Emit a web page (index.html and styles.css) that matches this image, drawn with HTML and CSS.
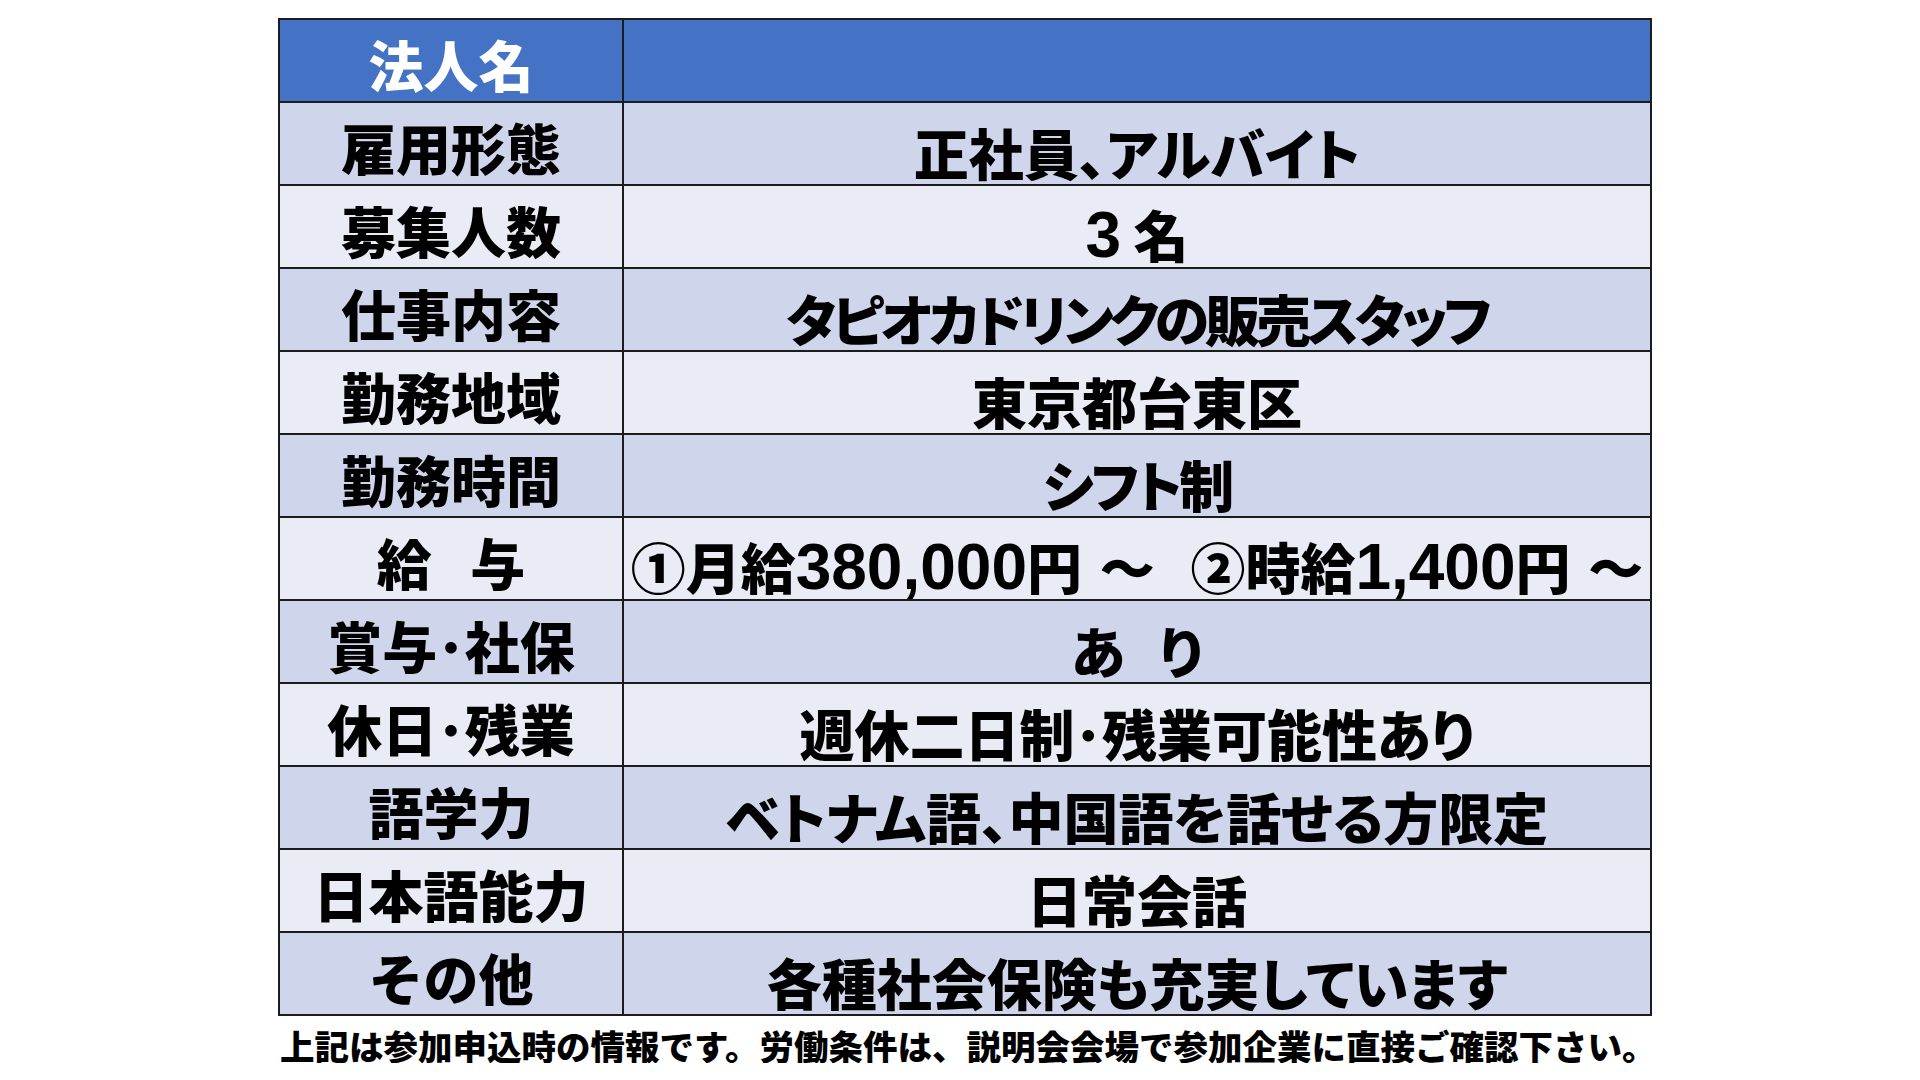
FILE: index.html
```html
<!DOCTYPE html>
<html lang="ja">
<head>
<meta charset="utf-8">
<title>募集要項</title>
<link rel="stylesheet" href="styles.css">
</head>
<body>
<div class="page">
  <table class="info">
    <colgroup><col class="c1"><col class="c2"></colgroup>
    <tr class="head"><th>法人名</th><td></td></tr>
    <tr class="odd"><th>雇用形態</th><td>正社員、アルバイト</td></tr>
    <tr class="even"><th>募集人数</th><td><span class="num">3</span> 名</td></tr>
    <tr class="odd"><th>仕事内容</th><td class="tight">タピオカドリンクの販売スタッフ</td></tr>
    <tr class="even"><th>勤務地域</th><td>東京都台東区</td></tr>
    <tr class="odd"><th>勤務時間</th><td class="tight2">シフト制</td></tr>
    <tr class="even"><th>給<span class="gap"></span>与</th><td class="salary">①月給<span class="num">380,000</span>円<span class="num"> </span>～<span class="num">  </span>②時給<span class="num">1,400</span>円<span class="num"> </span>～</td></tr>
    <tr class="odd"><th>賞与･社保</th><td>あ<span class="gap2"></span>り</td></tr>
    <tr class="even"><th>休日･残業</th><td>週休二日制･残業可能性あり</td></tr>
    <tr class="odd"><th>語学力</th><td>ベトナム語、中国語を話せる方限定</td></tr>
    <tr class="even"><th>日本語能力</th><td>日常会話</td></tr>
    <tr class="odd"><th>その他</th><td>各種社会保険も充実しています</td></tr>
  </table>
  <p class="note">上記は参加申込時の情報です。労働条件は、説明会会場で参加企業に直接ご確認下さい。</p>
</div>
</body>
</html>
```
FILE: styles.css
```css
body {
  margin: 0;
  background: #ffffff;
  font-family: "Noto Sans CJK JP", "Noto Sans CJK SC", sans-serif;
  color: #000000;
}

.page {
  padding: 18px 0 0 278px;
}

.info {
  border-collapse: collapse;
  table-layout: fixed;
  width: 1372px;
}

.c1 { width: 344px; }
.c2 { width: 1028px; }

.info tr { height: 83px; }

.info th,
.info td {
  border: 2px solid #1c1c1c;
  padding: 0;
  text-align: center;
  vertical-align: middle;
  font-size: 55px;
  font-weight: 900;
  line-height: 1;
  white-space: nowrap;
  overflow: visible;
}

.info th {
  padding-top: 6px;
}

.info td {
  padding-top: 16px;
  font-feature-settings: "palt";
}

.info td.salary {
  font-feature-settings: normal;
}

.info td.tight { letter-spacing: -4px; }
.info td.tight2 { letter-spacing: -3px; }

.gap {
  display: inline-block;
  width: 0.7em;
}

.gap2 {
  display: inline-block;
  width: 0.62em;
}

.head { background: #4472c4; }
.head th { color: #ffffff; }
.odd { background: #cfd5ea; }
.even { background: #e9ebf5; }

.num {
  font-family: "Liberation Sans", sans-serif;
  font-size: 64px;
  font-weight: 700;
  line-height: 1;
  white-space: pre;
}

.note {
  margin: 12px 0 0 2px;
  font-size: 34.5px;
  font-weight: 900;
  line-height: 1;
  white-space: nowrap;
}
```
